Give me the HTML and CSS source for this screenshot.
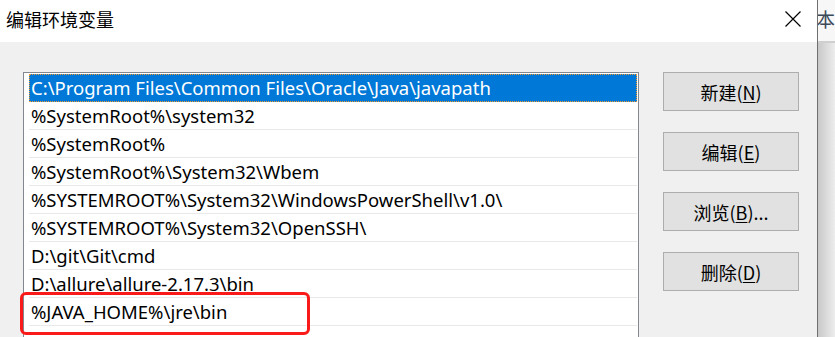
FILE: index.html
```html
<!DOCTYPE html>
<html lang="zh-CN">
<head>
    <meta charset="UTF-8">
    <title>编辑环境变量</title>
    <link rel="stylesheet" href="styles.css">
</head>
<body>

<div class="desk">
    <div class="dialog">
        <div class="titlebar">
            <span class="title">编辑环境变量</span>
            <svg class="close" width="16" height="16" viewBox="0 0 16 16">
                <path d="M0.5 0.5 L15.5 15.5 M15.5 0.5 L0.5 15.5" stroke="#000" stroke-width="1.2" fill="none"/>
            </svg>
        </div>

        <div class="content">
            <div class="listbox">
                <div class="row selected">C:\Program Files\Common Files\Oracle\Java\javapath</div>
                <div class="row">%SystemRoot%\system32</div>
                <div class="row">%SystemRoot%</div>
                <div class="row">%SystemRoot%\System32\Wbem</div>
                <div class="row">%SYSTEMROOT%\System32\WindowsPowerShell\v1.0\</div>
                <div class="row">%SYSTEMROOT%\System32\OpenSSH\</div>
                <div class="row">D:\git\Git\cmd</div>
                <div class="row">D:\allure\allure-2.17.3\bin</div>
                <div class="row">%JAVA_HOME%\jre\bin</div>
            </div>

            <div class="buttons">
                <button>新建(<u>N</u>)</button>
                <button>编辑(<u>E</u>)</button>
                <button>浏览(<u>B</u>)...</button>
                <button>删除(<u>D</u>)</button>
            </div>
        </div>

        <div class="highlight"></div>
    </div>

    <div class="behind">
        <div class="behind-top"><span>本</span></div>
    </div>
</div>

</body>
</html>
```

FILE: styles.css
```css
* {
    box-sizing: border-box;
    margin: 0;
    padding: 0;
}

body {
    width: 835px;
    height: 337px;
    overflow: hidden;
    background: #ececec;
    font-family: "Noto Sans", "Noto Sans CJK SC", sans-serif;
    color: #000;
}

.desk {
    display: flex;
    height: 337px;
}

.dialog {
    position: relative;
    width: 821px;
    height: 337px;
    overflow: hidden;
    border-right: 1px solid #6f6f6f;
    background: #f0f0f0;
    display: flex;
    flex-direction: column;
}

.titlebar {
    flex: none;
    height: 42px;
    background: #fff;
    display: flex;
    align-items: center;
    justify-content: space-between;
    padding: 0 16px 2px 6px;
}

.title {
    font-family: "Noto Sans CJK SC", sans-serif;
    font-size: 18px;
    line-height: 24px;
    margin-top: -2px;
}

.close {
    display: block;
    margin-top: -2px;
}

.content {
    flex: none;
    display: flex;
    align-items: flex-start;
    padding: 30px 0 0 23px;
}

.listbox {
    width: 616px;
    height: 280px;
    background: #fff;
    border: 1px solid #828790;
    padding: 1px 1px 0 5px;
}

.row {
    height: 28px;
    border-bottom: 1px solid #e9e9e9;
    padding-left: 2px;
    font-size: 18.5px;
    line-height: 27px;
    white-space: nowrap;
    overflow: hidden;
}

.row.selected {
    background: #0078d7;
    color: #fff;
    border: 1px dotted #f39a2e;
    padding-left: 1px;
    line-height: 25px;
}

.buttons {
    display: flex;
    flex-direction: column;
    gap: 21px;
    margin-left: 24px;
}

button {
    width: 136px;
    height: 39px;
    background: #e1e1e1;
    border: 1px solid #adadad;
    font-family: "Noto Sans CJK SC", sans-serif;
    font-size: 18px;
    color: #000;
}

button u {
    text-underline-offset: 2px;
}

.highlight {
    position: absolute;
    left: 20px;
    top: 292px;
    width: 290px;
    height: 43px;
    border: 3px solid #fa1a1a;
    border-radius: 6px;
}

.behind {
    flex: 1;
    background: linear-gradient(to right, #c8c8c8, #ededed);
}

.behind-top {
    height: 43px;
    background: #f7f7f7;
    border-bottom: 2px solid #cfcfcf;
    overflow: hidden;
    padding-top: 9px;
}

.behind-top span {
    display: block;
    margin-left: -2px;
    font-family: "Noto Sans CJK SC", sans-serif;
    font-size: 19px;
    line-height: 20px;
    color: #3c4a5a;
}
```
